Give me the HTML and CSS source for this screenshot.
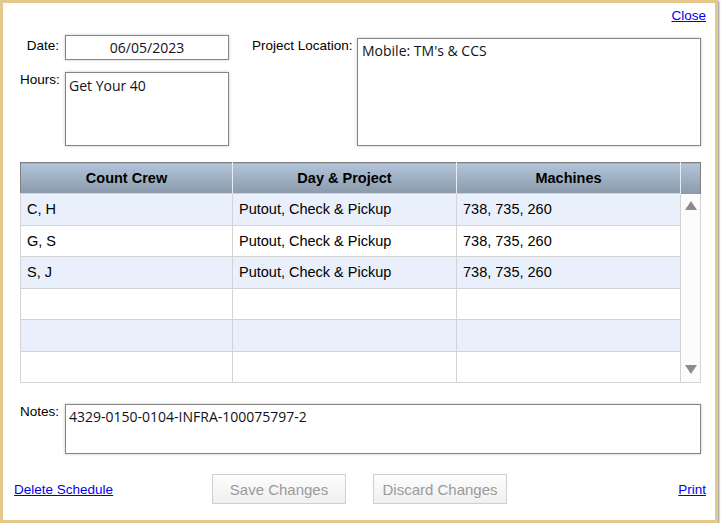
FILE: index.html
```html
<!DOCTYPE html>
<html lang="en">
<head>
    <meta charset="UTF-8">
    <meta name="viewport" content="width=device-width, initial-scale=1.0">
    <title>Edit Schedule</title>
    <link rel="stylesheet" href="styles.css">
</head>
<body>
    <div class="frame">
        <div class="top-links">
            <a href="#" class="link">Close</a>
        </div>

        <div class="form">
            <div class="top-section">
                <div class="left-fields">
                    <label class="field-label date-label">Date:</label>
                    <input class="box date-box" type="text" value="06/05/2023">
                    <label class="field-label">Hours:</label>
                    <textarea class="box hours-box">Get Your 40</textarea>
                </div>
                <div class="right-fields">
                    <label class="field-label location-label">Project Location:</label>
                    <textarea class="box location-box">Mobile: TM's &amp; CCS</textarea>
                </div>
            </div>

            <table class="crew-table">
                <colgroup>
                    <col class="col-crew">
                    <col class="col-day">
                    <col class="col-machines">
                    <col class="col-scroll">
                </colgroup>
                <thead>
                    <tr>
                        <th>Count Crew</th>
                        <th>Day &amp; Project</th>
                        <th>Machines</th>
                        <th></th>
                    </tr>
                </thead>
                <tbody>
                    <tr class="alt">
                        <td>C, H</td>
                        <td>Putout, Check &amp; Pickup</td>
                        <td>738, 735, 260</td>
                        <td class="scroll-cell" rowspan="6">
                            <div class="scroll-track">
                                <span class="arrow arrow-up"></span>
                                <span class="arrow arrow-down"></span>
                            </div>
                        </td>
                    </tr>
                    <tr>
                        <td>G, S</td>
                        <td>Putout, Check &amp; Pickup</td>
                        <td>738, 735, 260</td>
                    </tr>
                    <tr class="alt">
                        <td>S, J</td>
                        <td>Putout, Check &amp; Pickup</td>
                        <td>738, 735, 260</td>
                    </tr>
                    <tr>
                        <td></td>
                        <td></td>
                        <td></td>
                    </tr>
                    <tr class="alt">
                        <td></td>
                        <td></td>
                        <td></td>
                    </tr>
                    <tr>
                        <td></td>
                        <td></td>
                        <td></td>
                    </tr>
                </tbody>
            </table>

            <div class="notes-row">
                <label class="field-label">Notes:</label>
                <textarea class="box notes-box">4329-0150-0104-INFRA-100075797-2</textarea>
            </div>
        </div>

        <div class="bottom-bar">
            <a href="#" class="link">Delete Schedule</a>
            <div class="buttons">
                <button class="btn" disabled>Save Changes</button>
                <button class="btn" disabled>Discard Changes</button>
            </div>
            <a href="#" class="link print-link">Print</a>
        </div>
    </div>
</body>
</html>
```

FILE: styles.css
```css
body {
    margin: 0;
    background-color: #fff;
    font-family: 'Liberation Sans', Arial, sans-serif;
    font-size: 13.5px;
    color: #000;
}

.frame {
    box-sizing: border-box;
    width: 718px;
    height: 523px;
    border: 3px solid #e5c98c;
    box-shadow: 1px 1px 2px #8a8a8a;
    padding: 5px 9px 0 11px;
    display: flex;
    flex-direction: column;
}

.link {
    color: #0000ee;
    text-decoration: underline;
    line-height: 15px;
}

.top-links {
    display: flex;
    justify-content: flex-end;
    height: 15px;
}

.form {
    margin: 12px 5px 0 6px;
}

.top-section {
    display: flex;
    gap: 23px;
    height: 111px;
}

.left-fields {
    display: grid;
    grid-template-columns: 39px 164px;
    grid-template-rows: 25px 74px;
    column-gap: 6px;
    row-gap: 12px;
}

.right-fields {
    display: flex;
    gap: 6px;
    margin-top: 3px;
    flex: 1;
}

.field-label {
    text-align: right;
    line-height: 15px;
    white-space: nowrap;
}

.date-label {
    padding-top: 3px;
}

.location-label {
    width: 99px;
    flex-shrink: 0;
}

.box {
    box-sizing: border-box;
    margin: 0;
    border: 1px solid #858585;
    box-shadow: 0 0 3px rgba(0, 0, 0, 0.22);
    background: #fff;
    font-family: 'Open Sans', 'Noto Sans', sans-serif;
    font-size: 14px;
    color: #111122;
    padding: 2px 3px;
    resize: none;
    overflow: hidden;
    outline: none;
}

.date-box {
    height: 25px;
    text-align: center;
}

.hours-box {
    height: 74px;
    padding-top: 3px;
}

.location-box {
    flex: 1;
    height: 108px;
    padding-left: 4px;
}

.crew-table {
    margin-top: 16px;
    width: 681px;
    border-collapse: collapse;
    table-layout: fixed;
    border: 1px solid #808080;
    font-size: 14.5px;
}

.col-crew { width: 212px; }
.col-day { width: 224px; }
.col-machines { width: 224px; }
.col-scroll { width: 20px; }

.crew-table th {
    height: 30px;
    padding: 0;
    background: linear-gradient(#b3c5db, #8a9aab);
    border-left: 1px solid #e6ecf3;
    font-weight: bold;
    text-align: center;
}

.crew-table th:first-child {
    border-left: none;
}

.crew-table td {
    height: 30.5px;
    padding: 0 6px;
    border: 1px solid #d3d3d3;
    white-space: nowrap;
}

.crew-table tr.alt td {
    background-color: #e9f0fb;
}

.crew-table tr td.scroll-cell {
    padding: 0;
    background-color: #fbfbfb;
    border-top: none;
    vertical-align: top;
}

.scroll-track {
    display: flex;
    flex-direction: column;
    justify-content: space-between;
    align-items: center;
    height: 186px;
    padding: 7px 0 6px;
    box-sizing: border-box;
}

.arrow {
    width: 0;
    height: 0;
    border-left: 6px solid transparent;
    border-right: 6px solid transparent;
}

.arrow-up {
    border-bottom: 9px solid #8c8c8c;
}

.arrow-down {
    border-top: 9px solid #8c8c8c;
}

.notes-row {
    display: grid;
    grid-template-columns: 39px 1fr;
    column-gap: 6px;
    margin-top: 21px;
}

.notes-box {
    height: 50px;
}

.bottom-bar {
    display: grid;
    grid-template-columns: 198px auto 1fr;
    align-items: center;
    margin-top: 20px;
    height: 30px;
}

.buttons {
    display: flex;
    gap: 27px;
}

.print-link {
    justify-self: end;
}

.btn {
    width: 134px;
    height: 30px;
    border: 1px solid #cfcfcf;
    background: linear-gradient(#fdfdfd, #efefef);
    color: #9a9a9a;
    font-family: 'Liberation Sans', Arial, sans-serif;
    font-size: 15px;
    padding: 0;
}
```
